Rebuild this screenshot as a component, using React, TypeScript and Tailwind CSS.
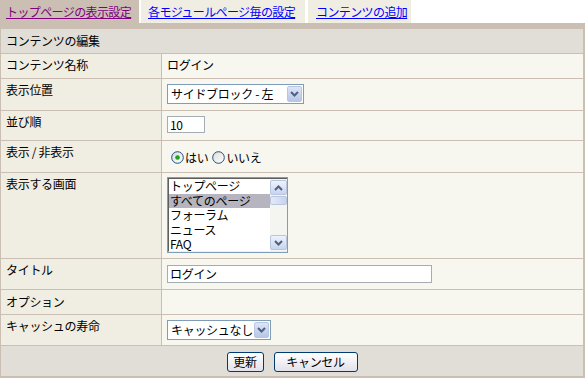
import React from "react";

const font = { fontFamily: '"Noto Sans CJK JP", "Liberation Sans", sans-serif' };

function Chevron()
{
  return (
    <svg width="9" height="6" viewBox="0 0 9 6">
      <path d="M1 1 L4.5 4.5 L8 1" fill="none" stroke="#4d6185" strokeWidth="2" />
    </svg>
  );
}

function ChevronUp()
{
  return (
    <svg width="9" height="6" viewBox="0 0 9 6">
      <path d="M1 5 L4.5 1.5 L8 5" fill="none" stroke="#4d6185" strokeWidth="2" />
    </svg>
  );
}

// XP style drop-down
function FakeSelect({ value, width }: { value: string; width: string })
{
  return (
    <div className={`flex h-[20px] ${width} items-stretch border border-[#7f9db9] bg-white`}>
      <div className="flex-1 whitespace-nowrap pl-[3px] text-[12px] leading-[18px] text-black">{value}</div>
      <div className="m-px flex w-[15px] items-center justify-center rounded-[2px] border border-[#b9c6e0] bg-gradient-to-b from-[#dde5f7] to-[#b7c6e6]">
        <Chevron />
      </div>
    </div>
  );
}

function Radio({ checked }: { checked: boolean })
{
  const id = checked ? "rg1" : "rg2";
  return (
    <svg width="13" height="13" viewBox="0 0 13 13">
      <defs>
        <linearGradient id={id} x1="0" y1="0" x2="1" y2="1">
          <stop offset="0" stopColor="#dcdcd7" />
          <stop offset="1" stopColor="#ffffff" />
        </linearGradient>
      </defs>
      <circle cx="6.5" cy="6.5" r="5.8" fill={`url(#${id})`} stroke="#1c5180" strokeWidth="1" />
      {checked && <circle cx="6.5" cy="6.5" r="2.3" fill="#21a121" />}
    </svg>
  );
}

function Label({ children }: { children: React.ReactNode })
{
  return <div className="bg-[#f0eee2] pl-[5px] pt-[4px] text-[12px] leading-[14px] text-black">{children}</div>;
}

function Value({ children, className = "" }: { children?: React.ReactNode; className?: string })
{
  return <div className={`bg-[#f7f6ef] pl-[5px] text-[12px] leading-[14px] text-black ${className}`}>{children}</div>;
}

export default function App()
{
  const pages = ["トップページ", "すべてのページ", "フォーラム", "ニュース", "FAQ"];

  return (
    <div className="h-[378px] w-[585px] overflow-hidden bg-white tracking-[-0.3px]" style={font}>
      {/* tabs */}
      <div className="flex h-[23px] whitespace-nowrap text-[12px] leading-[23px] tracking-[-0.6px]">
        <div className="w-[139px] bg-[#cbbfb3] pl-[6px]">
          <a className="text-[#800080] underline">トップページの表示設定</a>
        </div>
        <div className="ml-[2px] w-[164px] bg-[#f0eee2] pl-[7px]">
          <a className="text-[#0000ff] underline">各モジュールページ毎の設定</a>
        </div>
        <div className="ml-[3px] w-[103px] bg-[#f0eee2] pl-[8px]">
          <a className="text-[#0000ff] underline">コンテンツの追加</a>
        </div>
      </div>

      {/* form */}
      <div className="bg-[#cbbfb3] pt-[6px] pl-px pr-[2px] pb-[2px]">
        <div className="grid grid-cols-[160px_1fr] gap-px [grid-template-rows:24px_24px_31px_29px_31px_85px_30px_24px_30px_30px]">
          <div className="col-span-2 flex items-center bg-[#e0ded6] pl-[5px] text-[12px] text-black">コンテンツの編集</div>

          <Label>コンテンツ名称</Label>
          <Value className="pt-[4px]">ログイン</Value>

          <Label>表示位置</Label>
          <Value className="pt-[5px]">
            <FakeSelect value="サイドブロック - 左" width="w-[137px]" />
          </Value>

          <Label>並び順</Label>
          <Value className="pt-[5px]">
            <div className="h-[17px] w-[38px] border border-[#a5acb2] bg-white pl-[2px] text-[12px] leading-[15px]">10</div>
          </Value>

          <Label>表示 / 非表示</Label>
          <Value className="flex items-center pt-[2px] pl-[9px]">
            <Radio checked />
            <span className="ml-[1px]">はい</span>
            <span className="ml-[4px] flex"><Radio checked={false} /></span>
            <span className="ml-[1px]">いいえ</span>
          </Value>

          <Label>表示する画面</Label>
          <Value className="pt-[4px]">
            <div className="flex h-[76px] w-[121px] border border-[#7f9db9] bg-white">
              <div className="flex flex-1 border border-[#5e5e5e] border-r-0 border-b-[#f0f0f0]">
                <div className="flex-1">
                  {pages.map((p, i) => (
                    <div
                      key={p}
                      className={`h-[14.6px] whitespace-nowrap pl-px text-[12px] leading-[14.6px] ${i === 1 ? "bg-[#b5b4bf]" : ""}`}
                    >
                      {p}
                    </div>
                  ))}
                </div>
                <div className="flex w-[17px] flex-col justify-between bg-[#f4f4f0] py-px">
                  <div className="flex flex-col">
                    <div className="flex h-[15px] items-center justify-center rounded-[2px] border border-[#b9c6e0] bg-gradient-to-b from-[#eef2fc] to-[#c8d4ee]">
                      <ChevronUp />
                    </div>
                    <div className="mt-px h-[9px] rounded-[2px] border border-[#b9c6e0] bg-gradient-to-r from-[#e3e9f9] to-[#c8d4ee]" />
                  </div>
                  <div className="flex h-[15px] items-center justify-center rounded-[2px] border border-[#b9c6e0] bg-gradient-to-b from-[#eef2fc] to-[#c8d4ee]">
                    <Chevron />
                  </div>
                </div>
              </div>
            </div>
          </Value>

          <Label>タイトル</Label>
          <Value className="pt-[6px]">
            <div className="h-[18px] w-[265px] border border-[#a5acb2] bg-white pl-[2px] text-[12px] leading-[16px]">ログイン</div>
          </Value>

          <div className="flex items-center bg-[#f0eee2] pl-[5px] text-[12px] text-black">オプション</div>
          <Value />

          <Label>キャッシュの寿命</Label>
          <Value className="pt-[5px]">
            <FakeSelect value="キャッシュなし" width="w-[104px]" />
          </Value>

          <div className="col-span-2 flex justify-center gap-[10px] bg-[#e0ded6] pt-[6px]">
            <button className="h-[20px] w-[37px] rounded-[3px] border border-[#003c74] bg-gradient-to-b from-white to-[#e3e1ea] text-[12px] leading-[18px] text-black">更新</button>
            <button className="h-[20px] w-[84px] rounded-[3px] border border-[#003c74] bg-gradient-to-b from-white to-[#e3e1ea] text-[12px] leading-[18px] text-black">キャンセル</button>
          </div>
        </div>
      </div>
    </div>
  );
}
